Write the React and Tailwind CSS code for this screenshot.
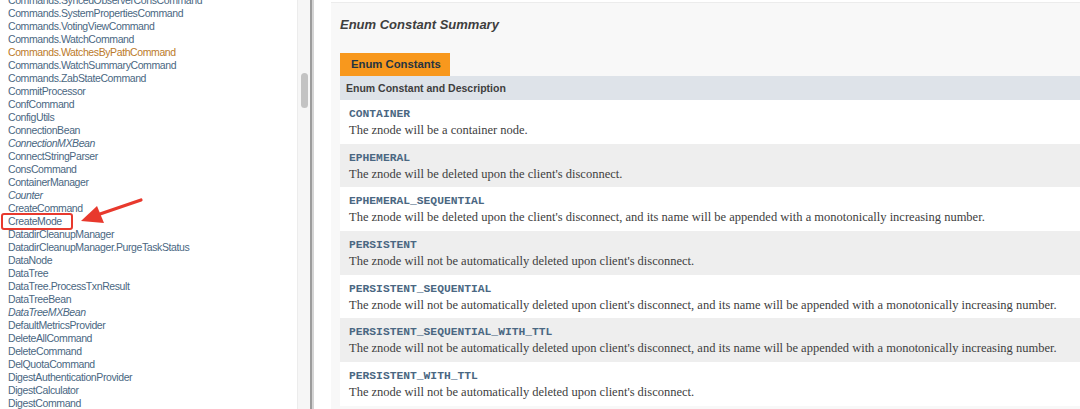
import React from "react";

const items = [
  ["Commands.SyncedObserverConsCommand"],
  ["Commands.SystemPropertiesCommand"],
  ["Commands.VotingViewCommand"],
  ["Commands.WatchCommand"],
  ["Commands.WatchesByPathCommand", "hover"],
  ["Commands.WatchSummaryCommand"],
  ["Commands.ZabStateCommand"],
  ["CommitProcessor"],
  ["ConfCommand"],
  ["ConfigUtils"],
  ["ConnectionBean"],
  ["ConnectionMXBean", "italic"],
  ["ConnectStringParser"],
  ["ConsCommand"],
  ["ContainerManager"],
  ["Counter", "italic"],
  ["CreateCommand"],
  ["CreateMode"],
  ["DatadirCleanupManager"],
  ["DatadirCleanupManager.PurgeTaskStatus"],
  ["DataNode"],
  ["DataTree"],
  ["DataTree.ProcessTxnResult"],
  ["DataTreeBean"],
  ["DataTreeMXBean", "italic"],
  ["DefaultMetricsProvider"],
  ["DeleteAllCommand"],
  ["DeleteCommand"],
  ["DelQuotaCommand"],
  ["DigestAuthenticationProvider"],
  ["DigestCalculator"],
  ["DigestCommand"],
];

const rows = [
  ["CONTAINER", "The znode will be a container node."],
  ["EPHEMERAL", "The znode will be deleted upon the client's disconnect."],
  ["EPHEMERAL_SEQUENTIAL", "The znode will be deleted upon the client's disconnect, and its name will be appended with a monotonically increasing number."],
  ["PERSISTENT", "The znode will not be automatically deleted upon client's disconnect."],
  ["PERSISTENT_SEQUENTIAL", "The znode will not be automatically deleted upon client's disconnect, and its name will be appended with a monotonically increasing number."],
  ["PERSISTENT_SEQUENTIAL_WITH_TTL", "The znode will not be automatically deleted upon client's disconnect, and its name will be appended with a monotonically increasing number."],
  ["PERSISTENT_WITH_TTL", "The znode will not be automatically deleted upon client's disconnect."],
];

export default function App() {
  return (
    <div className="w-[1080px] h-[409px] overflow-hidden bg-white flex font-['Liberation_Sans',Arial,sans-serif]">
      {/* Left list */}
      <div className="relative w-[297px] shrink-0 overflow-hidden">
        <div className="mt-[-6px] pl-[8px] flex flex-col">
          {items.map(([name, kind]) => (
            <div
              key={name}
              className={
                "h-[13px] leading-[13px] text-[10.5px] tracking-[-0.4px] whitespace-nowrap " +
                (kind === "hover" ? "text-[#bb7a2a] " : "text-[#4a6782] ") +
                (kind === "italic" ? "italic" : "")
              }
            >
              {name}
            </div>
          ))}
        </div>
        {/* red highlight box */}
        <div className="absolute left-[1px] top-[213px] w-[72px] h-[17px] border-2 border-[#e8392d] rounded-[3px]" />
        {/* arrow */}
        <svg className="absolute left-[78px] top-[196px]" width="70" height="34" viewBox="0 0 70 34">
          <path d="M63 4 L22 18" stroke="#e8392d" strokeWidth="3.2" strokeLinecap="round" fill="none" />
          <path d="M3 25 L19 10 L26 27 Z" fill="#e8392d" />
        </svg>
      </div>

      {/* scrollbar */}
      <div className="w-[13px] shrink-0 bg-[#f6f6f6] border-l border-[#ececec] pt-[73px] flex justify-center">
        <div className="w-[7px] h-[35px] rounded-full bg-[#c3c3c3]" />
      </div>

      {/* divider */}
      <div className="w-[2px] shrink-0 bg-[#9c9c9c]" />
      <div className="w-[2px] shrink-0 bg-[#d4d4d4]" />

      {/* right content */}
      <div className="flex-1 pl-[17px] pt-[2px] overflow-hidden">
        <div className="h-full bg-[#f8f8f8] border-t border-[#ececec] pl-[9px] pt-[14px]">
          <div className="text-[13px] font-bold italic text-[#3e3e3e] leading-[15px] h-[36px]">
            Enum Constant Summary
          </div>
          <div className="w-[110px] h-[23px] bg-[#f8981d] text-[#253441] text-[11.3px] font-bold leading-[23px] pl-[11px]">
            Enum Constants
          </div>
          <div className="w-[800px]">
            <div className="h-[24px] bg-[#dee3e9] text-[10.5px] font-bold text-[#3e3e3e] leading-[24px] pl-[6px]">
              Enum Constant and Description
            </div>
            {rows.map(([code, desc], i) => (
              <div
                key={code}
                className={"h-[43.7px] pl-[9px] pt-[7px] " + (i % 2 === 0 ? "bg-white" : "bg-[#eeeeee]")}
              >
                <div className="font-['Liberation_Mono','Courier_New',monospace] font-bold text-[11.3px] leading-[14px] text-[#4a6782]">
                  {code}
                </div>
                <div className="font-['Liberation_Serif','Times_New_Roman',serif] text-[12.5px] leading-[18px] text-[#404040] whitespace-nowrap">
                  {desc}
                </div>
              </div>
            ))}
          </div>
        </div>
      </div>
    </div>
  );
}
